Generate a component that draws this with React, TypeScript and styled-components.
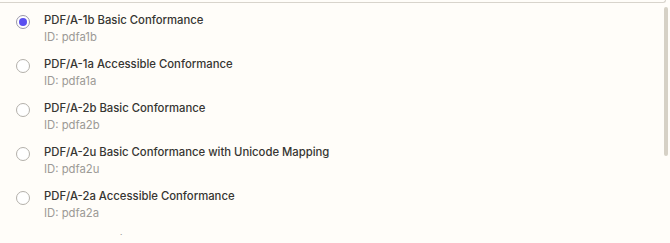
import styled, { createGlobalStyle } from 'styled-components';

const GlobalStyle = createGlobalStyle`
  html, body {
    margin: 0;
    padding: 0;
    background: #fffdf9;
  }
  body {
    font-family: Inter, "Noto Sans", sans-serif;
  }
`;

const Page = styled.div`
  width: 670px;
  height: 243px;
  display: flex;
  flex-direction: column;
  overflow: hidden;
  background: #fffdf9;
`;

const TopEdge = styled.div`
  width: 665px;
  height: 2px;
  flex-shrink: 0;
  border: 1px solid #d8d4cc;
  border-top: 0;
  border-left: 0;
  border-radius: 0 0 5px 0;
`;

const ListFrame = styled.div`
  position: relative;
  height: 232px;
  flex-shrink: 0;
`;

const List = styled.div`
  height: 100%;
  overflow-y: scroll;
  scrollbar-width: none;
  &::-webkit-scrollbar {
    display: none;
  }
`;

const Thumb = styled.div`
  position: absolute;
  top: 4px;
  right: 2px;
  width: 4px;
  height: 149px;
  border-radius: 2px;
  background: #d6d1c6;
`;

const Row = styled.label`
  display: flex;
  align-items: flex-start;
  gap: 14px;
  padding: 10px 16px 3px;
  cursor: pointer;
`;

const Radio = styled.span<{ $checked?: boolean }>`
  width: 14px;
  height: 14px;
  margin-top: 2px;
  box-sizing: border-box;
  border-radius: 50%;
  border: 1px solid ${(p) => (p.$checked ? '#9b98a8' : '#b3b0aa')};
  background: #fff;
  display: flex;
  align-items: center;
  justify-content: center;
  flex-shrink: 0;
  &::after {
    content: '';
    width: 8px;
    height: 8px;
    border-radius: 50%;
    background: ${(p) => (p.$checked ? '#5a4ff0' : 'transparent')};
  }
`;

const Text = styled.div`
  display: flex;
  flex-direction: column;
  gap: 3px;
`;

const Title = styled.div`
  font-size: 11.3px;
  line-height: 14px;
  font-weight: 500;
  color: #363532;
`;

const Id = styled.div`
  font-size: 11.3px;
  line-height: 14px;
  color: #9c9a96;
`;

const options = [
  { id: 'pdfa1b', name: 'PDF/A-1b Basic Conformance' },
  { id: 'pdfa1a', name: 'PDF/A-1a Accessible Conformance' },
  { id: 'pdfa2b', name: 'PDF/A-2b Basic Conformance' },
  { id: 'pdfa2u', name: 'PDF/A-2u Basic Conformance with Unicode Mapping' },
  { id: 'pdfa2a', name: 'PDF/A-2a Accessible Conformance' },
  { id: 'pdfa3b', name: 'PDF/A-3b Basic Conformance' },
  { id: 'pdfa3u', name: 'PDF/A-3u Basic Conformance with Unicode Mapping' },
  { id: 'pdfa3a', name: 'PDF/A-3a Accessible Conformance' },
  { id: 'pdfa4', name: 'PDF/A-4 Conformance' },
];

function App() {
  const selected = 'pdfa1b';
  return (
    <>
      <GlobalStyle />
      <Page>
        <TopEdge />
        <ListFrame>
          <List>
            {options.map((o) => (
              <Row key={o.id}>
                <Radio $checked={o.id === selected} />
                <Text>
                  <Title>{o.name}</Title>
                  <Id>ID: {o.id}</Id>
                </Text>
              </Row>
            ))}
          </List>
          <Thumb />
        </ListFrame>
      </Page>
    </>
  );
}

export default App;
